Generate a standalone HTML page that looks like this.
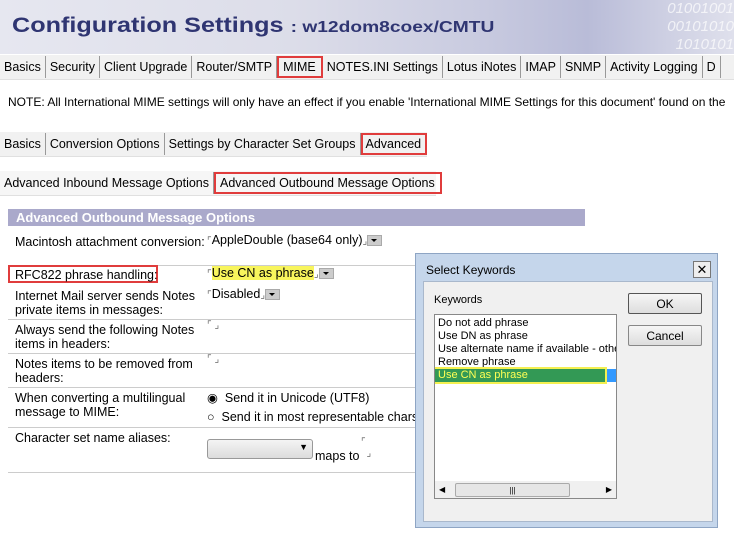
<!DOCTYPE html>
<html><head><style>
body{margin:0;width:734px;height:542px;position:relative;overflow:hidden;background:#fff;font-family:"Liberation Sans",sans-serif;font-size:12px;color:#000}
.a{position:absolute;white-space:nowrap}
.hdr{left:0;top:0;width:734px;height:54px;background:linear-gradient(90deg,#e6e7f0 0%,#dcdde9 40%,#c9cbe0 65%,#b9bcd8 80%,#dfe0ec 100%)}
.tabs{left:0;height:24px;background:#f1f1f1;border-bottom:1px solid #e0e0e0}
.tab{display:inline-block;padding:0 4px;line-height:22px;border-right:1px solid #999;font-size:12.5px;margin-top:1px}
.red{outline:2px solid #e03c3c;outline-offset:-2px}
.row{left:8px;width:408px;border-top:1px solid #ccc}
.cb{font-size:10px;color:#666}
.dd{display:inline-block;width:13px;height:9px;background:#ccc;vertical-align:middle;border:1px solid #aaa;position:relative}
.dd:after{content:"";position:absolute;left:3px;top:3px;border:3px solid transparent;border-top:3px solid #000;border-bottom:0}
</style></head><body>
<div class="a hdr"></div>
<div class="a" style="left:460px;top:0;width:274px;height:54px;color:#fff;opacity:.7;font-size:15px;font-style:italic;text-align:right;line-height:18px">01001001<br>00101010<br>1010101</div>
<div class="a" style="left:12px;top:14px;font-size:21px;font-weight:bold;color:#2f3572;transform:scaleX(1.2);transform-origin:0 0">Configuration Settings <span style="font-size:16px">: w12dom8coex/CMTU</span></div>
<div class="a tabs" style="top:55px;width:734px"><span class="tab">Basics</span><span class="tab">Security</span><span class="tab">Client Upgrade</span><span class="tab">Router/SMTP</span><span class="tab red" style="padding:0 6px">MIME</span><span class="tab">NOTES.INI Settings</span><span class="tab">Lotus iNotes</span><span class="tab">IMAP</span><span class="tab">SNMP</span><span class="tab">Activity Logging</span><span class="tab">D</span></div>
<div class="a" style="left:8px;top:95px;font-size:12px">NOTE: All International MIME settings will only have an effect if you enable 'International MIME Settings for this document' found on the</div>
<div class="a tabs" style="top:132px;width:427px"><span class="tab">Basics</span><span class="tab">Conversion Options</span><span class="tab">Settings by Character Set Groups</span><span class="tab red" style="padding:0 5px">Advanced</span></div>
<div class="a tabs" style="top:171px;width:436px;background:#f6f6f6"><span class="tab">Advanced Inbound Message Options</span><span class="tab red" style="padding:0 6px">Advanced Outbound Message Options</span></div>
<div class="a" style="left:8px;top:209px;width:577px;height:17px;background:#aaa9cb;color:#fff;font-weight:bold;font-size:13px;line-height:17px;padding-left:8px;box-sizing:border-box">Advanced Outbound Message Options</div>
<div class="a" style="left:15px;top:235px;font-size:12.5px">Macintosh attachment conversion:</div>
<div class="a" style="left:207px;top:233px;font-size:12.5px"><span class="cb">⌜</span>AppleDouble (base64 only)<span class="cb">⌟</span><span class="dd"></span></div>
<div class="a row" style="top:265px"></div>
<div class="a" style="left:8px;top:265px;width:150px;height:18px;border:2px solid #e03c3c;box-sizing:border-box"></div>
<div class="a" style="left:15px;top:268px;font-size:12.5px">RFC822 phrase handling:</div>
<div class="a" style="left:207px;top:266px;font-size:12.5px"><span class="cb">⌜</span><span style="background:#f8f55c">Use CN as phrase</span><span class="cb">⌟</span><span class="dd"></span></div>
<div class="a" style="left:15px;top:289px;font-size:12.5px;line-height:14px">Internet Mail server sends Notes<br>private items in messages:</div>
<div class="a" style="left:207px;top:287px;font-size:12.5px"><span class="cb">⌜</span>Disabled<span class="cb">⌟</span><span class="dd"></span></div>
<div class="a row" style="top:319px"></div>
<div class="a" style="left:15px;top:323px;font-size:12.5px;line-height:14px">Always send the following Notes<br>items in headers:</div>
<div class="a cb" style="left:207px;top:320px">⌜ ⌟</div>
<div class="a row" style="top:353px"></div>
<div class="a" style="left:15px;top:357px;font-size:12.5px;line-height:14px">Notes items to be removed from<br>headers:</div>
<div class="a cb" style="left:207px;top:354px">⌜ ⌟</div>
<div class="a row" style="top:387px"></div>
<div class="a" style="left:15px;top:391px;font-size:12.5px;line-height:14px">When converting a multilingual<br>message to MIME:</div>
<div class="a" style="left:207px;top:389px;font-size:12.5px;line-height:19px">◉&nbsp; Send it in Unicode (UTF8)<br>○&nbsp; Send it in most representable chars</div>
<div class="a row" style="top:427px"></div>
<div class="a" style="left:15px;top:431px;font-size:12.5px">Character set name aliases:</div>
<div class="a" style="left:207px;top:439px;width:104px;height:18px;border:1px solid #999;border-radius:3px;background:linear-gradient(#f4f4f4,#dcdcdc)"><span style="position:absolute;right:4px;top:2px;font-size:9px">▼</span></div>
<div class="a" style="left:315px;top:449px;font-size:12.5px">maps to</div>
<div class="a cb" style="left:361px;top:437px">⌜<br>&nbsp;&nbsp;⌟</div>
<div class="a row" style="top:472px"></div>
<div class="a" style="left:415px;top:253px;width:303px;height:275px;background:#c5d6eb;border:1px solid #8ea5c4;box-sizing:border-box"></div>
<div class="a" style="left:426px;top:263px;font-size:12px">Select Keywords</div>
<div class="a" style="left:693px;top:261px;width:16px;height:15px;border:1px solid #777;background:#eee;text-align:center;font-size:13px;line-height:15px">✕</div>
<div class="a" style="left:423px;top:281px;width:288px;height:239px;background:#f0f0f0;border:1px solid #a9b8cc"></div>
<div class="a" style="left:434px;top:294px;font-size:11px">Keywords</div>
<div class="a" style="left:434px;top:314px;width:183px;height:185px;background:#fff;border:1px solid #888;box-sizing:border-box;overflow:hidden;font-size:11px;line-height:13px">
<div style="padding-left:3px;margin-top:2px">Do not add phrase<br>Use DN as phrase<br>Use alternate name if available - other<br>Remove phrase</div>
<div style="position:relative;height:13px;background:#3399ff"><div style="width:170px;height:13px;background:#339955;color:#ff5;padding-left:3px;box-sizing:border-box;outline:2px solid #f4f050">Use CN as phrase</div></div>
<div style="position:absolute;left:0;bottom:0;width:181px;height:17px;background:#f0f0f0"><div style="position:absolute;left:20px;top:2px;width:113px;height:12px;border:1px solid #aaa;border-radius:2px;background:#e6e6e6;text-align:center;font-size:8px">|||</div><span style="position:absolute;left:4px;top:2px;font-size:8px">◀</span><span style="position:absolute;right:4px;top:2px;font-size:8px">▶</span></div>
</div>
<div class="a" style="left:628px;top:293px;width:74px;height:21px;border:1px solid #555;border-radius:2px;background:linear-gradient(#f6f6f6,#ddd);text-align:center;line-height:21px;font-size:12px;box-sizing:border-box">OK</div>
<div class="a" style="left:628px;top:325px;width:74px;height:21px;border:1px solid #888;border-radius:2px;background:linear-gradient(#f6f6f6,#ddd);text-align:center;line-height:20px;font-size:12px;box-sizing:border-box">Cancel</div>
</body></html>
